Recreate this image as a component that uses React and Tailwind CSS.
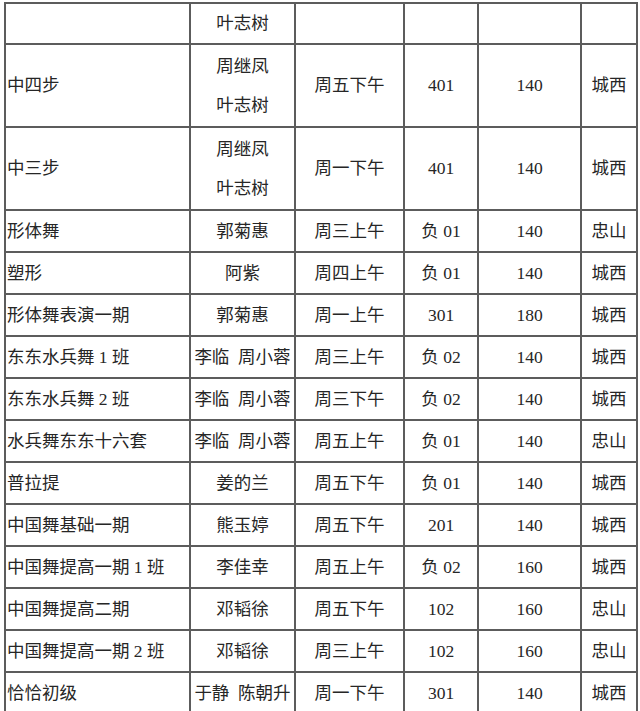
import React from "react";

const rows = [
  { name: "", teachers: ["叶志树"], time: "", room: "", fee: "", place: "", h: "h-[41px]" },
  { name: "中四步", teachers: ["周继凤", "叶志树"], time: "周五下午", room: "401", fee: "140", place: "城西", h: "h-[83px]" },
  { name: "中三步", teachers: ["周继凤", "叶志树"], time: "周一下午", room: "401", fee: "140", place: "城西", h: "h-[83px]" },
  { name: "形体舞", teachers: ["郭菊惠"], time: "周三上午", room: "负 01", fee: "140", place: "忠山" },
  { name: "塑形", teachers: ["阿紫"], time: "周四上午", room: "负 01", fee: "140", place: "城西" },
  { name: "形体舞表演一期", teachers: ["郭菊惠"], time: "周一上午", room: "301", fee: "180", place: "城西" },
  { name: "东东水兵舞 1 班", teachers: ["李临  周小蓉"], time: "周三上午", room: "负 02", fee: "140", place: "城西" },
  { name: "东东水兵舞 2 班", teachers: ["李临  周小蓉"], time: "周三下午", room: "负 02", fee: "140", place: "城西" },
  { name: "水兵舞东东十六套", teachers: ["李临  周小蓉"], time: "周五上午", room: "负 01", fee: "140", place: "忠山" },
  { name: "普拉提", teachers: ["姜的兰"], time: "周五下午", room: "负 01", fee: "140", place: "城西" },
  { name: "中国舞基础一期", teachers: ["熊玉婷"], time: "周五下午", room: "201", fee: "140", place: "城西" },
  { name: "中国舞提高一期 1 班", teachers: ["李佳幸"], time: "周五上午", room: "负 02", fee: "160", place: "城西" },
  { name: "中国舞提高二期", teachers: ["邓韬徐"], time: "周五下午", room: "102", fee: "160", place: "忠山" },
  { name: "中国舞提高一期 2 班", teachers: ["邓韬徐"], time: "周三上午", room: "102", fee: "160", place: "忠山" },
  { name: "恰恰初级", teachers: ["于静  陈朝升"], time: "周一下午", room: "301", fee: "140", place: "城西" },
];

const cell = "border-2 border-[#5c5c5c] p-0 align-middle whitespace-pre";

export default function App() {
  return (
    <div className="h-[711px] w-[640px] overflow-hidden bg-white text-[#262626] text-[17.5px] font-['Liberation_Serif','Noto_Sans_CJK_SC',serif]">
      <table className="ml-[4px] mt-[2px] table-fixed border-collapse w-[632px]">
        <colgroup>
          <col className="w-[185px]" />
          <col className="w-[105px]" />
          <col className="w-[109px]" />
          <col className="w-[74px]" />
          <col className="w-[103px]" />
          <col className="w-[56px]" />
        </colgroup>
        <tbody>
          {rows.map((r, i) => (
            <tr key={i} className={r.h || "h-[42px]"}>
              <td className={cell + " pl-[1px] text-left"}>{r.name}</td>
              <td className={cell + " text-center"}>
                {r.teachers.map((t, j) => (
                  <div key={j} className="leading-[39px]">{t}</div>
                ))}
              </td>
              <td className={cell + " text-center"}>{r.time}</td>
              <td className={cell + " text-center"}>{r.room}</td>
              <td className={cell + " text-center"}>{r.fee}</td>
              <td className={cell + " text-center"}>{r.place}</td>
            </tr>
          ))}
        </tbody>
      </table>
    </div>
  );
}
